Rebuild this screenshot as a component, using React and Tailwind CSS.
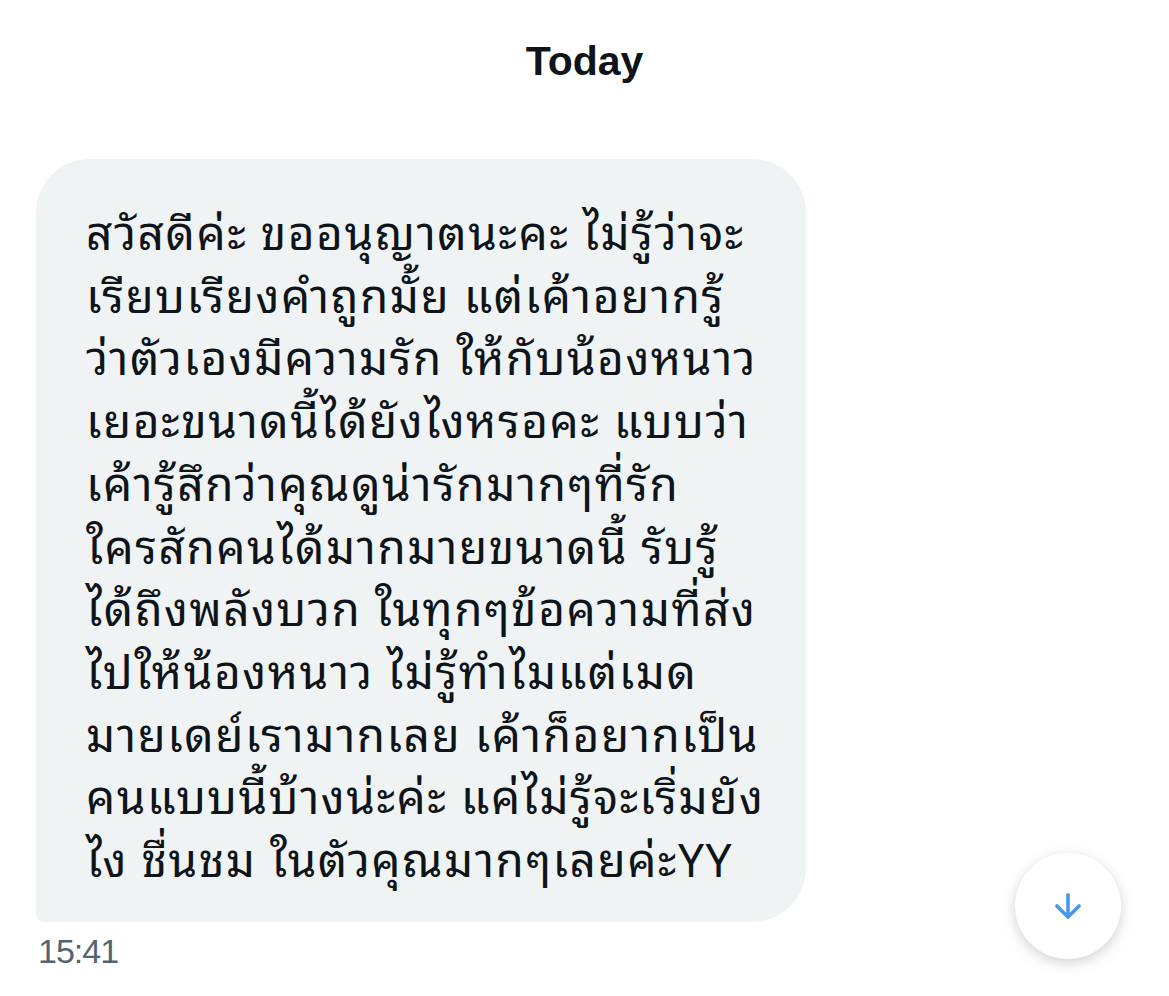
import { ArrowDown } from "lucide-react";

const lines = [
  "สวัสดีค่ะ ขออนุญาตนะคะ ไม่รู้ว่าจะ",
  "เรียบเรียงคำถูกมั้ย แต่เค้าอยากรู้",
  "ว่าตัวเองมีความรัก ให้กับน้องหนาว",
  "เยอะขนาดนี้ได้ยังไงหรอคะ แบบว่า",
  "เค้ารู้สึกว่าคุณดูน่ารักมากๆที่รัก",
  "ใครสักคนได้มากมายขนาดนี้ รับรู้",
  "ได้ถึงพลังบวก ในทุกๆข้อความที่ส่ง",
  "ไปให้น้องหนาว ไม่รู้ทำไมแต่เมด",
  "มายเดย์เรามากเลย เค้าก็อยากเป็น",
  "คนแบบนี้บ้างน่ะค่ะ แค่ไม่รู้จะเริ่มยัง",
  "ไง ชื่นชม ในตัวคุณมากๆเลยค่ะYY",
];

const App = () => {
  return (
    <div className="relative h-[996px] w-[1169px] overflow-hidden bg-white font-['Noto_Sans_Thai_Looped','Noto_Sans_Thai','Noto_Sans',sans-serif] text-[#0f1419]">
      <div className="flex h-[124px] items-center justify-center">
        <span className="text-[41px] font-bold font-['Liberation_Sans',sans-serif]">Today</span>
      </div>

      <div className="pl-[36px] pt-[35px]">
        <div className="w-[770px] rounded-t-[54px] rounded-br-[54px] rounded-bl-[8px] bg-[#eff3f4] pl-[50px] pr-6 pt-[39px] pb-[34px]">
          {lines.map((line) => (
            <div key={line} className="whitespace-nowrap text-[46px] leading-[62.7px] tracking-[1.5px]">
              {line}
            </div>
          ))}
        </div>
        <div className="mt-[9px] pl-[2px] text-[34px] leading-[40px] tracking-[-1px] text-[#536471] font-['Liberation_Sans',sans-serif]">
          15:41
        </div>
      </div>

      <button className="absolute left-[1015px] top-[853px] flex h-[106px] w-[106px] items-center justify-center rounded-full bg-white shadow-[0_4px_14px_rgba(0,0,0,0.18)]">
        <ArrowDown className="h-[38px] w-[38px] text-[#4a99e9]" strokeWidth={2.3} />
      </button>
    </div>
  );
};

export default App;
